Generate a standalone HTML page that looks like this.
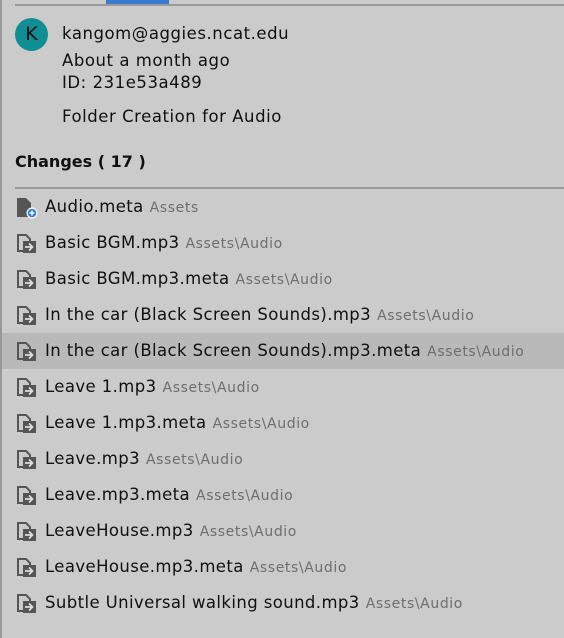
<!DOCTYPE html><html><head><style>
body{margin:0;width:564px;height:638px;background:#cbcbcb;font-family:"DejaVu Sans",sans-serif;position:relative;overflow:hidden;color:#101010}
.lb{position:absolute;left:0;top:0;width:2px;height:638px;background:#999}
.tl{position:absolute;left:15px;right:0;top:4px;height:2px;background:#999}
.bl{position:absolute;left:106px;width:63px;top:0;height:4px;background:#3a7bd0}
.av{position:absolute;left:15px;top:18px;width:33px;height:33px;border-radius:50%;background:#118d94;color:#111;font-size:19px;text-align:center;line-height:33px}
.t{position:absolute;left:62px;font-size:16.5px;white-space:nowrap;letter-spacing:0.55px}
.h{position:absolute;left:15px;top:152px;font-size:16px;font-weight:bold}
.hl{position:absolute;left:15px;right:0;top:187px;height:2px;background:#999}
.row{position:absolute;left:15px;right:0;height:36px;line-height:36px;font-size:16.5px;white-space:nowrap;letter-spacing:0.4px}
.row.sel{background:#b9b9b9;left:2px;padding-left:13px}
.row svg{position:absolute;top:8px}
.row .n{position:absolute;left:30px}
.p{color:#6e6e6e;font-size:14px;margin-left:6px;letter-spacing:0.6px}
</style></head><body>
<div class="lb"></div><div class="tl"></div><div class="bl"></div>
<div class="av">K</div>
<div class="t" style="top:24px">kangom@aggies.ncat.edu</div>
<div class="t" style="top:51px">About a month ago</div>
<div class="t" style="top:73px">ID: 231e53a489</div>
<div class="t" style="top:107px">Folder Creation for Audio</div>
<div class="h">Changes ( 17 )</div>
<div class="hl"></div>
<div class="row" style="top:189px"><svg width="24" height="22" viewBox="0 0 24 22"><path d="M2 1h9l5 5v14H2z" fill="#555"/><circle cx="17" cy="16" r="5.5" fill="#fff"/><circle cx="17" cy="16" r="4.3" fill="#2b7fd8"/><path d="M14.5 16h5M17 13.5v5" stroke="#fff" stroke-width="1.6"/></svg><span class="n">Audio.meta<span class="p">Assets</span></span></div>
<script>
var d=[["Basic BGM.mp3"],["Basic BGM.mp3.meta"],["In the car (Black Screen Sounds).mp3"],["In the car (Black Screen Sounds).mp3.meta",1],["Leave 1.mp3"],["Leave 1.mp3.meta"],["Leave.mp3"],["Leave.mp3.meta"],["LeaveHouse.mp3"],["LeaveHouse.mp3.meta"],["Subtle Universal walking sound.mp3"]];
var ic='<svg width="24" height="22" viewBox="0 0 24 22"><path d="M3 2h8l4 4v12H3z" fill="none" stroke="#555" stroke-width="2"/><rect x="8" y="8" width="13" height="12" fill="#555"/><path d="M10 14h7M14 10.5l3.5 3.5-3.5 3.5" stroke="#ddd" stroke-width="1.7" fill="none"/></svg>';
var h='';d.forEach(function(r,i){h+='<div class="row'+(r[1]?' sel':'')+'" style="top:'+(225+36*i)+'px">'+ic.replace('<svg','<svg style="left:'+(r[1]?13:0)+'px"')+'<span class="n" style="left:'+(r[1]?43:30)+'px">'+r[0]+'<span class="p">Assets\\Audio</span></span></div>'});
document.write(h);
</script>
</body></html>
